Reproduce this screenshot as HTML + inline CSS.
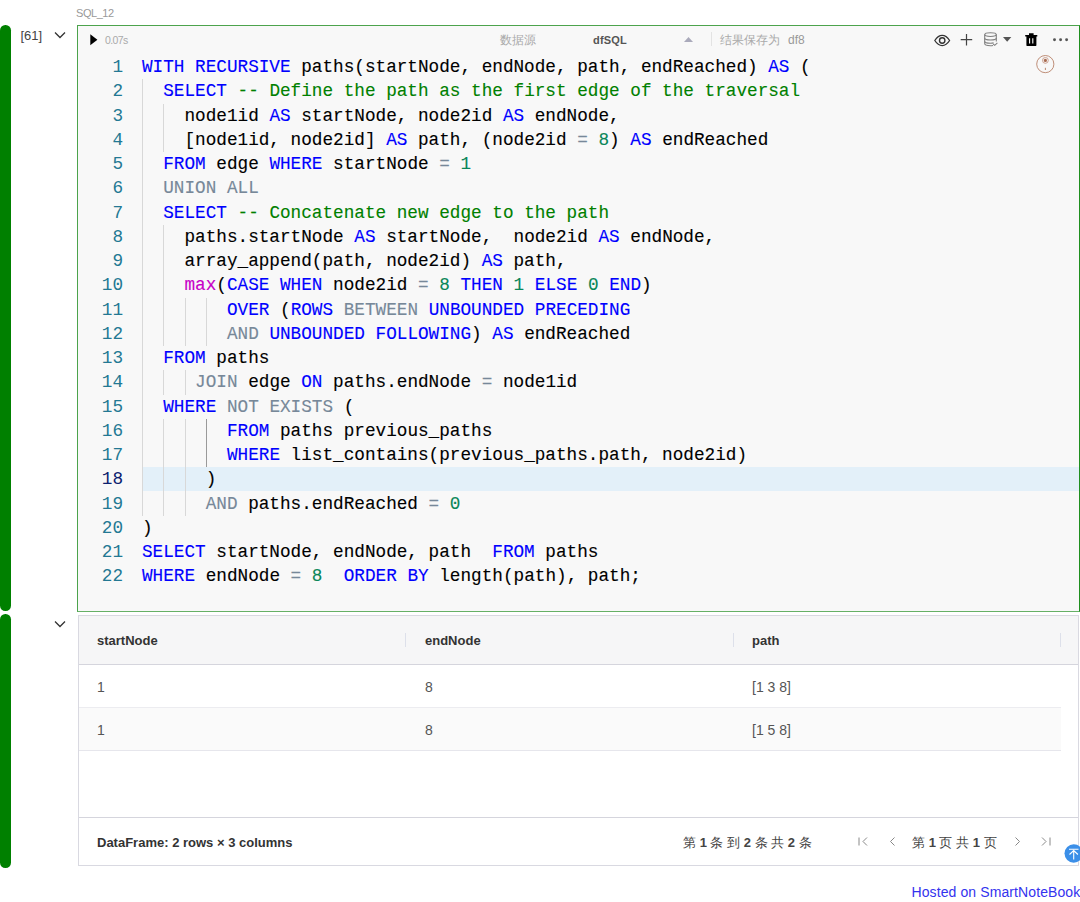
<!DOCTYPE html>
<html><head><meta charset="utf-8">
<style>
*{box-sizing:border-box}
html,body{margin:0;padding:0;background:#fff;width:1080px;height:902px;overflow:hidden;position:relative;font-family:"Liberation Sans",sans-serif}
.abs{position:absolute;white-space:nowrap}
.bar{position:absolute;left:0;width:10.6px;background:#008000;border-radius:5.3px}
.label{position:absolute;left:76px;top:7px;font-size:11px;letter-spacing:-0.45px;color:#999}
.cnt{position:absolute;left:20.5px;top:28px;font-size:13px;color:#444}
.cell{position:absolute;left:77px;top:25px;width:1003px;height:587px;border:1px solid #4ca34c;border-right-color:#1f8f1f;border-bottom-color:#66b066;background:#f8f8f8}
.ln{position:absolute;left:0;width:123px;text-align:right;color:#237893;height:24.25px;line-height:24.25px;font-family:"Liberation Mono",monospace;font-size:17.7px}
.ln.act{color:#0b216f}
.cl{position:absolute;left:142px;height:24.25px;line-height:24.25px;font-family:"Liberation Mono",monospace;font-size:17.7px;white-space:pre;color:#000;-webkit-text-stroke:0.12px currentColor}
.k{color:#0000ff}.c{color:#008000}.n{color:#098658}.o{color:#778899}.p{color:#c700c7}
.g{position:absolute;width:1px;background:#d8d8d8}
.ga{background:#9a9a9a}
.th{position:absolute;top:633px;font-size:13px;font-weight:bold;color:#333}
.td{position:absolute;font-size:14px;color:#555}
.pg{font-size:13px;color:#444}
.hl{position:absolute;left:142px;width:937px;background:#e3f0f9}
</style></head><body>
<div class="label">SQL_12</div>
<div class="bar" style="top:25px;height:586px"></div>
<div class="bar" style="top:614px;height:254px"></div>
<div class="cnt">[61]</div>
<svg class="abs" style="left:54px;top:31px" width="12" height="9" viewBox="0 0 12 9"><path d="M1 1.5 L6 6.5 L11 1.5" fill="none" stroke="#333" stroke-width="1.3"/></svg>
<div class="cell"></div>
<svg class="abs" style="left:90px;top:34px" width="9" height="12" viewBox="0 0 9 12"><path d="M0.3 0.3 L7.4 5.8 L0.3 11.3Z" fill="#000"/></svg>
<div class="abs" style="left:105px;top:34px;font-size:10.5px;letter-spacing:-0.6px;color:#aaa">0.07s</div>
<div class="abs" style="left:500px;top:32px;font-size:12px;color:#aaa">数据源</div>
<div class="abs" style="left:593px;top:34px;font-size:11px;letter-spacing:0.2px;color:#555;font-weight:bold">dfSQL</div>
<svg class="abs" style="left:684px;top:37px" width="9" height="5" viewBox="0 0 9 5"><path d="M0 5 L4.5 0 L9 5Z" fill="#aab"/></svg>
<div class="abs" style="left:711px;top:32px;width:1px;height:14px;background:#e3e3e3"></div>
<div class="abs" style="left:720px;top:32px;font-size:12px;color:#aaa">结果保存为</div><div class="abs" style="left:788px;top:33px;font-size:12px;color:#999">df8</div>

<svg class="abs" style="left:930px;top:28px" width="150" height="50" viewBox="930 28 150 50">
<path d="M934.8 40.5 C937.5 36.3 940 35.4 942.2 35.4 C944.4 35.4 946.9 36.3 949.6 40.5 C946.9 44.7 944.4 45.6 942.2 45.6 C940 45.6 937.5 44.7 934.8 40.5Z" fill="none" stroke="#333" stroke-width="1.3"/>
<circle cx="942.2" cy="40.5" r="2.7" fill="none" stroke="#333" stroke-width="1.4"/>
<path d="M966.5 34V45.4 M960.7 39.6H972.2" stroke="#444" stroke-width="1.2" fill="none"/>
<g fill="none" stroke="#808080" stroke-width="1.1">
<ellipse cx="990.5" cy="34.6" rx="5.8" ry="1.9"/>
<path d="M984.7 34.6V43.6 C984.7 44.8 987.2 45.7 990.5 45.7 C991.5 45.7 992.3 45.6 993 45.5"/>
<path d="M996.3 34.6V41.5"/>
<path d="M984.7 38 C984.7 39.1 987.2 40 990.5 40 C993.8 40 996.3 39.1 996.3 38"/>
<path d="M984.7 41.2 C984.7 42.3 987.2 43.2 990.5 43.2 C991.8 43.2 992.8 43.1 993.6 42.9"/>
<path d="M993.2 44 L994.7 45.3 L997.4 42.8"/>
</g>
<path d="M1003 37H1011.3L1007.15 41.8Z" fill="#555"/>
<path d="M1025.2 35H1037.3V36.6H1025.2Z M1029 33.2H1033.6V35.2H1029Z M1026.4 36.2H1036.4V45.3Q1036.4 45.9 1035.8 45.9H1027Q1026.4 45.9 1026.4 45.3Z" fill="#000"/>
<path d="M1029.6 38.2V43.6 M1032.8 38.2V43.6" stroke="#fff" stroke-width="1.1"/>
<circle cx="1054.5" cy="39.7" r="1.45" fill="#555"/><circle cx="1060.6" cy="39.7" r="1.45" fill="#555"/><circle cx="1066.6" cy="39.7" r="1.45" fill="#555"/>
<circle cx="1045.3" cy="64.1" r="8.6" fill="none" stroke="#b8826a" stroke-width="0.9"/>
<circle cx="1045.4" cy="60.4" r="2.9" fill="none" stroke="#c79a88" stroke-width="0.9"/>
<circle cx="1045.4" cy="60.4" r="1.6" fill="#a86b50"/>
<path d="M1045.4 67.8V70" stroke="#b07a60" stroke-width="0.9"/>
</svg>
<div class="hl" style="top:467px;height:24px"></div>
<div class="ln" style="top:55.00px">1</div>
<div class="cl" style="top:55.00px"><span class="k">WITH RECURSIVE</span> paths(startNode, endNode, path, endReached) <span class="k">AS</span> (</div>
<div class="ln" style="top:79.25px">2</div>
<div class="cl" style="top:79.25px">  <span class="k">SELECT</span> <span class="c">-- Define the path as the first edge of the traversal</span></div>
<div class="ln" style="top:103.50px">3</div>
<div class="cl" style="top:103.50px">    node1id <span class="k">AS</span> startNode, node2id <span class="k">AS</span> endNode,</div>
<div class="ln" style="top:127.75px">4</div>
<div class="cl" style="top:127.75px">    [node1id, node2id] <span class="k">AS</span> path, (node2id <span class="o">=</span> <span class="n">8</span>) <span class="k">AS</span> endReached</div>
<div class="ln" style="top:152.00px">5</div>
<div class="cl" style="top:152.00px">  <span class="k">FROM</span> edge <span class="k">WHERE</span> startNode <span class="o">=</span> <span class="n">1</span></div>
<div class="ln" style="top:176.25px">6</div>
<div class="cl" style="top:176.25px">  <span class="o">UNION ALL</span></div>
<div class="ln" style="top:200.50px">7</div>
<div class="cl" style="top:200.50px">  <span class="k">SELECT</span> <span class="c">-- Concatenate new edge to the path</span></div>
<div class="ln" style="top:224.75px">8</div>
<div class="cl" style="top:224.75px">    paths.startNode <span class="k">AS</span> startNode,  node2id <span class="k">AS</span> endNode,</div>
<div class="ln" style="top:249.00px">9</div>
<div class="cl" style="top:249.00px">    array_append(path, node2id) <span class="k">AS</span> path,</div>
<div class="ln" style="top:273.25px">10</div>
<div class="cl" style="top:273.25px">    <span class="p">max</span>(<span class="k">CASE WHEN</span> node2id <span class="o">=</span> <span class="n">8</span> <span class="k">THEN</span> <span class="n">1</span> <span class="k">ELSE</span> <span class="n">0</span> <span class="k">END</span>)</div>
<div class="ln" style="top:297.50px">11</div>
<div class="cl" style="top:297.50px">        <span class="k">OVER</span> (<span class="k">ROWS</span> <span class="o">BETWEEN</span> <span class="k">UNBOUNDED PRECEDING</span></div>
<div class="ln" style="top:321.75px">12</div>
<div class="cl" style="top:321.75px">        <span class="o">AND</span> <span class="k">UNBOUNDED FOLLOWING</span>) <span class="k">AS</span> endReached</div>
<div class="ln" style="top:346.00px">13</div>
<div class="cl" style="top:346.00px">  <span class="k">FROM</span> paths</div>
<div class="ln" style="top:370.25px">14</div>
<div class="cl" style="top:370.25px">     <span class="o">JOIN</span> edge <span class="k">ON</span> paths.endNode <span class="o">=</span> node1id</div>
<div class="ln" style="top:394.50px">15</div>
<div class="cl" style="top:394.50px">  <span class="k">WHERE</span> <span class="o">NOT EXISTS</span> (</div>
<div class="ln" style="top:418.75px">16</div>
<div class="cl" style="top:418.75px">        <span class="k">FROM</span> paths previous_paths</div>
<div class="ln" style="top:443.00px">17</div>
<div class="cl" style="top:443.00px">        <span class="k">WHERE</span> list_contains(previous_paths.path, node2id)</div>
<div class="ln act" style="top:467.25px">18</div>
<div class="cl" style="top:467.25px">      )</div>
<div class="ln" style="top:491.50px">19</div>
<div class="cl" style="top:491.50px">      <span class="o">AND</span> paths.endReached <span class="o">=</span> <span class="n">0</span></div>
<div class="ln" style="top:515.75px">20</div>
<div class="cl" style="top:515.75px">)</div>
<div class="ln" style="top:540.00px">21</div>
<div class="cl" style="top:540.00px"><span class="k">SELECT</span> startNode, endNode, path  <span class="k">FROM</span> paths</div>
<div class="ln" style="top:564.25px">22</div>
<div class="cl" style="top:564.25px"><span class="k">WHERE</span> endNode <span class="o">=</span> <span class="n">8</span>  <span class="k">ORDER BY</span> length(path), path;</div>
<div class="g" style="left:142px;top:79.25px;height:436.50px"></div>
<div class="g" style="left:163px;top:103.50px;height:48.50px"></div>
<div class="g" style="left:163px;top:224.75px;height:121.25px"></div>
<div class="g" style="left:163px;top:370.25px;height:24.25px"></div>
<div class="g" style="left:163px;top:418.75px;height:97.00px"></div>
<div class="g" style="left:185px;top:297.50px;height:48.50px"></div>
<div class="g" style="left:185px;top:370.25px;height:24.25px"></div>
<div class="g" style="left:185px;top:418.75px;height:97.00px"></div>
<div class="g" style="left:206px;top:297.50px;height:48.50px"></div>
<div class="g ga" style="left:206px;top:418.75px;height:48.50px"></div>
<svg class="abs" style="left:54px;top:620px" width="12" height="9" viewBox="0 0 12 9"><path d="M1 1.5 L6 6.5 L11 1.5" fill="none" stroke="#333" stroke-width="1.3"/></svg>
<div class="abs" style="left:78px;top:615px;width:1001px;height:251px;border:1px solid #d9d9e1;background:#fff"></div>
<div class="abs" style="left:79px;top:616px;width:999px;height:48px;background:#f6f6f7"></div>
<div class="abs" style="left:79px;top:664px;width:999px;height:1px;background:#d5d5dd"></div>
<div class="abs" style="left:405px;top:633px;width:1px;height:14px;background:#dde0ea"></div>
<div class="abs" style="left:733px;top:633px;width:1px;height:14px;background:#dde0ea"></div>
<div class="abs" style="left:1060px;top:633px;width:1px;height:14px;background:#dde0ea"></div>
<div class="th" style="left:97px">startNode</div>
<div class="th" style="left:425px">endNode</div>
<div class="th" style="left:752px">path</div>
<div class="abs" style="left:79px;top:707px;width:982px;height:1px;background:#ececf0"></div>
<div class="abs" style="left:79px;top:708px;width:982px;height:42px;background:#fafafa"></div>
<div class="abs" style="left:79px;top:750px;width:982px;height:1px;background:#e6e6ec"></div>
<div class="td" style="left:97px;top:679px">1</div>
<div class="td" style="left:425px;top:679px">8</div>
<div class="td" style="left:752px;top:679px">[1 3 8]</div>
<div class="td" style="left:97px;top:722px">1</div>
<div class="td" style="left:425px;top:722px">8</div>
<div class="td" style="left:752px;top:722px">[1 5 8]</div>
<div class="abs" style="left:79px;top:817px;width:999px;height:1px;background:#d5d5dd"></div>
<div class="abs" style="left:97px;top:835px;font-size:13px;font-weight:bold;color:#333">DataFrame: 2 rows × 3 columns</div>
<div class="abs pg" style="left:683px;top:834px">第 <b>1</b> 条 到 <b>2</b> 条 共 <b>2</b> 条</div>
<svg class="abs" style="left:858px;top:837px" width="10" height="9" viewBox="0 0 10 9"><path d="M1 0.5V8.5 M9 0.5 L5 4.5 L9 8.5" fill="none" stroke="#888" stroke-width="1"/></svg>
<svg class="abs" style="left:888px;top:837px" width="8" height="9" viewBox="0 0 8 9"><path d="M6.5 0.5 L2.5 4.5 L6.5 8.5" fill="none" stroke="#888" stroke-width="1"/></svg>
<div class="abs pg" style="left:912px;top:834px">第 <b>1</b> 页 共 <b>1</b> 页</div>
<svg class="abs" style="left:1014px;top:837px" width="8" height="9" viewBox="0 0 8 9"><path d="M1.5 0.5 L5.5 4.5 L1.5 8.5" fill="none" stroke="#888" stroke-width="1"/></svg>
<svg class="abs" style="left:1041px;top:837px" width="10" height="9" viewBox="0 0 10 9"><path d="M1 0.5 L5 4.5 L1 8.5 M9 0.5V8.5" fill="none" stroke="#888" stroke-width="1"/></svg>
<svg class="abs" style="left:1060px;top:840px" width="20" height="25" viewBox="1060 840 20 25"><circle cx="1073.7" cy="853.5" r="9.2" fill="#3b8fe8"/><path d="M1069 849.3H1078.5 M1073.7 851V859.6 M1069.5 854.5 L1073.7 850.6 L1077.9 854.5" fill="none" stroke="#fff" stroke-width="1.1"/></svg>
<div class="abs" style="left:911.5px;top:884px;font-size:14px;letter-spacing:0.1px;white-space:nowrap;color:#3333ee">Hosted on SmartNoteBook</div>
</body></html>
